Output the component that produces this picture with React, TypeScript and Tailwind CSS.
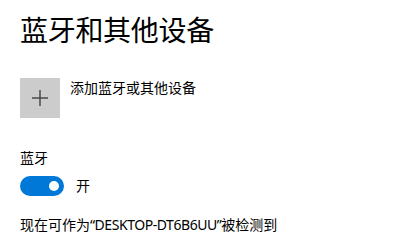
export default function App() {
  const font = { fontFamily: '"Noto Sans", "Noto Sans CJK SC", sans-serif' };
  return (
    <div className="w-[399px] h-[252px] bg-white text-black pl-5" style={font}>
      <div className="pt-[10px] h-[50px] text-[28px] leading-[40px] tracking-[-0.3px]">蓝牙和其他设备</div>
      <div className="mt-[28px] flex items-start gap-[10px]">
        <div className="w-10 h-10 bg-[#cccccc] flex items-center justify-center">
          <svg width="18" height="18" viewBox="0 0 18 18">
            <path d="M9 1v16M1 9h16" stroke="#4a4a4a" strokeWidth="1.5" fill="none" />
          </svg>
        </div>
        <div className="text-[14px] leading-[20px] -mt-[0.5px]">添加蓝牙或其他设备</div>
      </div>
      <div className="mt-[30px] text-[14px] leading-[20px]">蓝牙</div>
      <div className="mt-[8px] flex items-center gap-3 h-5">
        <div className="w-11 h-5 rounded-full bg-[#0078d7] flex items-center justify-end pr-[5px]">
          <div className="w-[10px] h-[10px] rounded-full bg-white" />
        </div>
        <div className="text-[14px] leading-[20px]">开</div>
      </div>
      <div className="mt-[19px] text-[14px] leading-[20px]">
        现在可作为<span className="tracking-[-0.45px]">“DESKTOP-DT6B6UU”</span>被检测到
      </div>
    </div>
  );
}
